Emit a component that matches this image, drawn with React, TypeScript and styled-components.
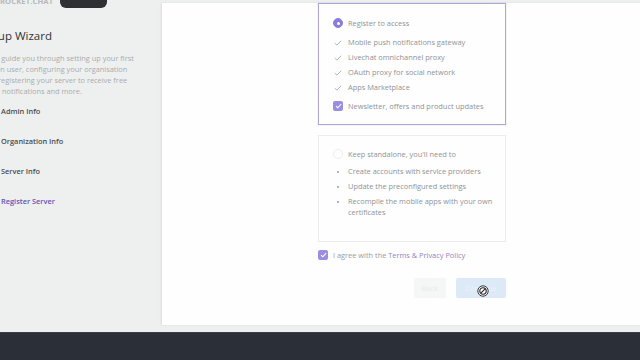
import React from "react";
import styled, { createGlobalStyle } from "styled-components";

const Global = createGlobalStyle`
  html, body { margin: 0; padding: 0; }
  body {
    width: 640px; height: 360px; overflow: hidden;
    background: #eef0ef;
    font-family: "Open Sans", "Noto Sans", sans-serif;
  }
`;

const Page = styled.div`
  display: flex; flex-direction: column; width: 640px; height: 360px;
`;

const Main = styled.div`
  display: flex; height: 332px; background: #eef0ef;
`;

const Sidebar = styled.aside`
  width: 162px; flex: none; overflow: hidden;
`;

const SideInner = styled.div`
  margin: -6px 0 0 -19px; width: 190px;
  display: flex; flex-direction: column;
`;

const LogoRow = styled.div`
  display: flex; align-items: center; gap: 7px; height: 14px; padding-left: 19px;
`;

const LogoText = styled.span`
  font-size: 7.6px; font-weight: 700; letter-spacing: 0.1px; color: #b5b9bb;
  width: 53px; white-space: nowrap;
`;

const Badge = styled.span`
  background: #2e3033; border-radius: 6px; width: 47px; height: 13px;
`;

const Title = styled.h1`
  margin: 19px 0 0; font-size: 11.5px; font-weight: 500; color: #2f3337;
  line-height: 18px;
`;

const Intro = styled.p`
  margin: 8px 0 0 2px; font-size: 7.4px; line-height: 11px; color: #a9acae;
`;

const Steps = styled.ol`
  list-style: none; margin: 8px 0 0; padding: 0 0 0 20px;
  display: flex; flex-direction: column; gap: 18px;
`;

const Step = styled.li<{ $active?: boolean }>`
  font-size: 7.4px; line-height: 12px; font-weight: 600;
  color: ${(p) => (p.$active ? "#6453b8" : "#4a4d50")};
`;

const CardArea = styled.div`
  flex: 1; padding: 3px 0 7px 0; display: flex;
`;

const Card = styled.section`
  flex: 1; background: #fefefe; box-shadow: -1px 0 2px rgba(0,0,0,0.08);
  padding: 0 0 0 156px; display: flex; flex-direction: column;
  position: relative;
`;

const Column = styled.div`
  width: 188px; display: flex; flex-direction: column;
`;

const Option = styled.div<{ $selected?: boolean }>`
  box-sizing: border-box;
  border: 1px solid ${(p) => (p.$selected ? "#aca6d4" : "#ebecec")};
  box-shadow: ${(p) => (p.$selected ? "0 0 1px rgba(120,110,200,0.4)" : "none")};
  padding: ${(p) => (p.$selected ? "13px" : "12px")} 10px 0 14px;
  height: ${(p) => (p.$selected ? "122px" : "107px")};
  display: flex; flex-direction: column;
`;

const Head = styled.div`
  display: flex; align-items: center; gap: 5px; height: 12px;
  font-size: 7.4px; color: #909397;
`;

const Radio = styled.span<{ $on?: boolean }>`
  box-sizing: border-box; width: 10px; height: 10px; border-radius: 50%;
  background: ${(p) => (p.$on ? "#8b7edb" : "#fff")};
  border: 1px solid ${(p) => (p.$on ? "#8b7edb" : "#eeeeee")};
  display: flex; align-items: center; justify-content: center;
  &::after {
    content: ""; width: 3px; height: 3px; border-radius: 50%;
    background: ${(p) => (p.$on ? "#fff" : "transparent")};
  }
`;

const List = styled.ul<{ $top: number }>`
  list-style: none; margin: ${(p) => p.$top}px 0 0; padding: 0;
  display: flex; flex-direction: column; gap: 3px;
`;

const Item = styled.li`
  display: flex; align-items: flex-start; gap: 5px;
  font-size: 7.4px; line-height: 11px; color: #909397;
  min-height: 12px;
`;

const Marker = styled.span`
  width: 10px; flex: none; height: 11px;
  display: flex; align-items: center; justify-content: center;
`;

const Dot = styled.span`
  width: 2px; height: 2px; border-radius: 50%; background: #9a9da0;
`;

const Box = styled.span`
  width: 10px; height: 10px; border-radius: 2px; background: #9a8ee0; flex: none;
  display: flex; align-items: center; justify-content: center;
`;

const NewsRow = styled.div`
  display: flex; align-items: center; gap: 5px; margin-top: 6px;
  font-size: 7.4px; color: #909397; height: 12px;
`;

const Spacer = styled.div<{ $h: number }>`
  height: ${(p) => p.$h}px; flex: none;
`;

const Agree = styled.label`
  display: flex; align-items: center; gap: 5px; font-size: 7.4px; color: #9a9da0;
  height: 12px;
`;

const Link = styled.span`
  color: #8d88c6;
`;

const Buttons = styled.div`
  display: flex; justify-content: flex-end; gap: 10px; margin-top: 17px;
`;

const Btn = styled.button<{ $primary?: boolean }>`
  border: 0; border-radius: 2px; height: 20px; font-family: inherit;
  font-size: 7.4px; padding: 0;
  width: ${(p) => (p.$primary ? "50px" : "32px")};
  background: ${(p) => (p.$primary ? "#dde9f6" : "#f5f6f6")};
  color: ${(p) => (p.$primary ? "#eef4fb" : "#eaeaea")};
`;

const Cursor = styled.svg`
  position: absolute; left: 315px; top: 282px;
`;

const Footer = styled.footer`
  height: 28px; background: #2b2f38; border-top: 1px solid #3a3e46; box-sizing: border-box;
`;

const Check = () => (
  <svg width="8" height="6" viewBox="0 0 8 6">
    <path d="M0.8 3.2 L2.9 5 L7.2 0.8" fill="none" stroke="#a7aaad" strokeWidth="0.9" />
  </svg>
);

const WhiteCheck = () => (
  <svg width="7" height="6" viewBox="0 0 7 6">
    <path d="M1 3.2 L2.8 4.8 L6.2 1" fill="none" stroke="#fff" strokeWidth="1.1" />
  </svg>
);

export default function App() {
  return (
    <Page>
      <Global />
      <Main>
        <Sidebar>
          <SideInner>
            <LogoRow>
              <LogoText>ROCKET.CHAT</LogoText>
              <Badge />
            </LogoRow>
            <Title>Setup Wizard</Title>
            <Intro>
              We'll guide you through setting up your first
              <br />
              admin user, configuring your organisation
              <br />
              and registering your server to receive free
              <br />
              push notifications and more.
            </Intro>
            <Steps>
              <Step>Admin Info</Step>
              <Step>Organization Info</Step>
              <Step>Server Info</Step>
              <Step $active>Register Server</Step>
            </Steps>
          </SideInner>
        </Sidebar>
        <CardArea>
          <Card>
            <Column>
              <Option $selected>
                <Head>
                  <Radio $on />
                  Register to access
                </Head>
                <List $top={8}>
                  {[
                    "Mobile push notifications gateway",
                    "Livechat omnichannel proxy",
                    "OAuth proxy for social network",
                    "Apps Marketplace",
                  ].map((t) => (
                    <Item key={t}>
                      <Marker><Check /></Marker>
                      {t}
                    </Item>
                  ))}
                </List>
                <NewsRow>
                  <Box><WhiteCheck /></Box>
                  Newsletter, offers and product updates
                </NewsRow>
              </Option>
              <Spacer $h={10} />
              <Option>
                <Head>
                  <Radio />
                  Keep standalone, you'll need to
                </Head>
                <List $top={6}>
                  {[
                    "Create accounts with service providers",
                    "Update the preconfigured settings",
                    "Recompile the mobile apps with your own certificates",
                  ].map((t) => (
                    <Item key={t}>
                      <Marker><Dot /></Marker>
                      <span>{t}</span>
                    </Item>
                  ))}
                </List>
              </Option>
              <Spacer $h={7} />
              <Agree>
                <Box><WhiteCheck /></Box>
                <span>
                  I agree with the <Link>Terms &amp; Privacy Policy</Link>
                </span>
              </Agree>
              <Buttons>
                <Btn>Back</Btn>
                <Btn $primary>Continue</Btn>
              </Buttons>
            </Column>
            <Cursor width="12" height="12" viewBox="0 0 12 12">
              <circle cx="6" cy="6" r="5.2" fill="#fff" stroke="#222" strokeWidth="0.9" />
              <circle cx="6" cy="6" r="3.2" fill="none" stroke="#222" strokeWidth="1.1" />
              <path d="M3.8 8.2 L8.2 3.8" stroke="#222" strokeWidth="1.1" />
            </Cursor>
          </Card>
        </CardArea>
      </Main>
      <Footer />
    </Page>
  );
}
